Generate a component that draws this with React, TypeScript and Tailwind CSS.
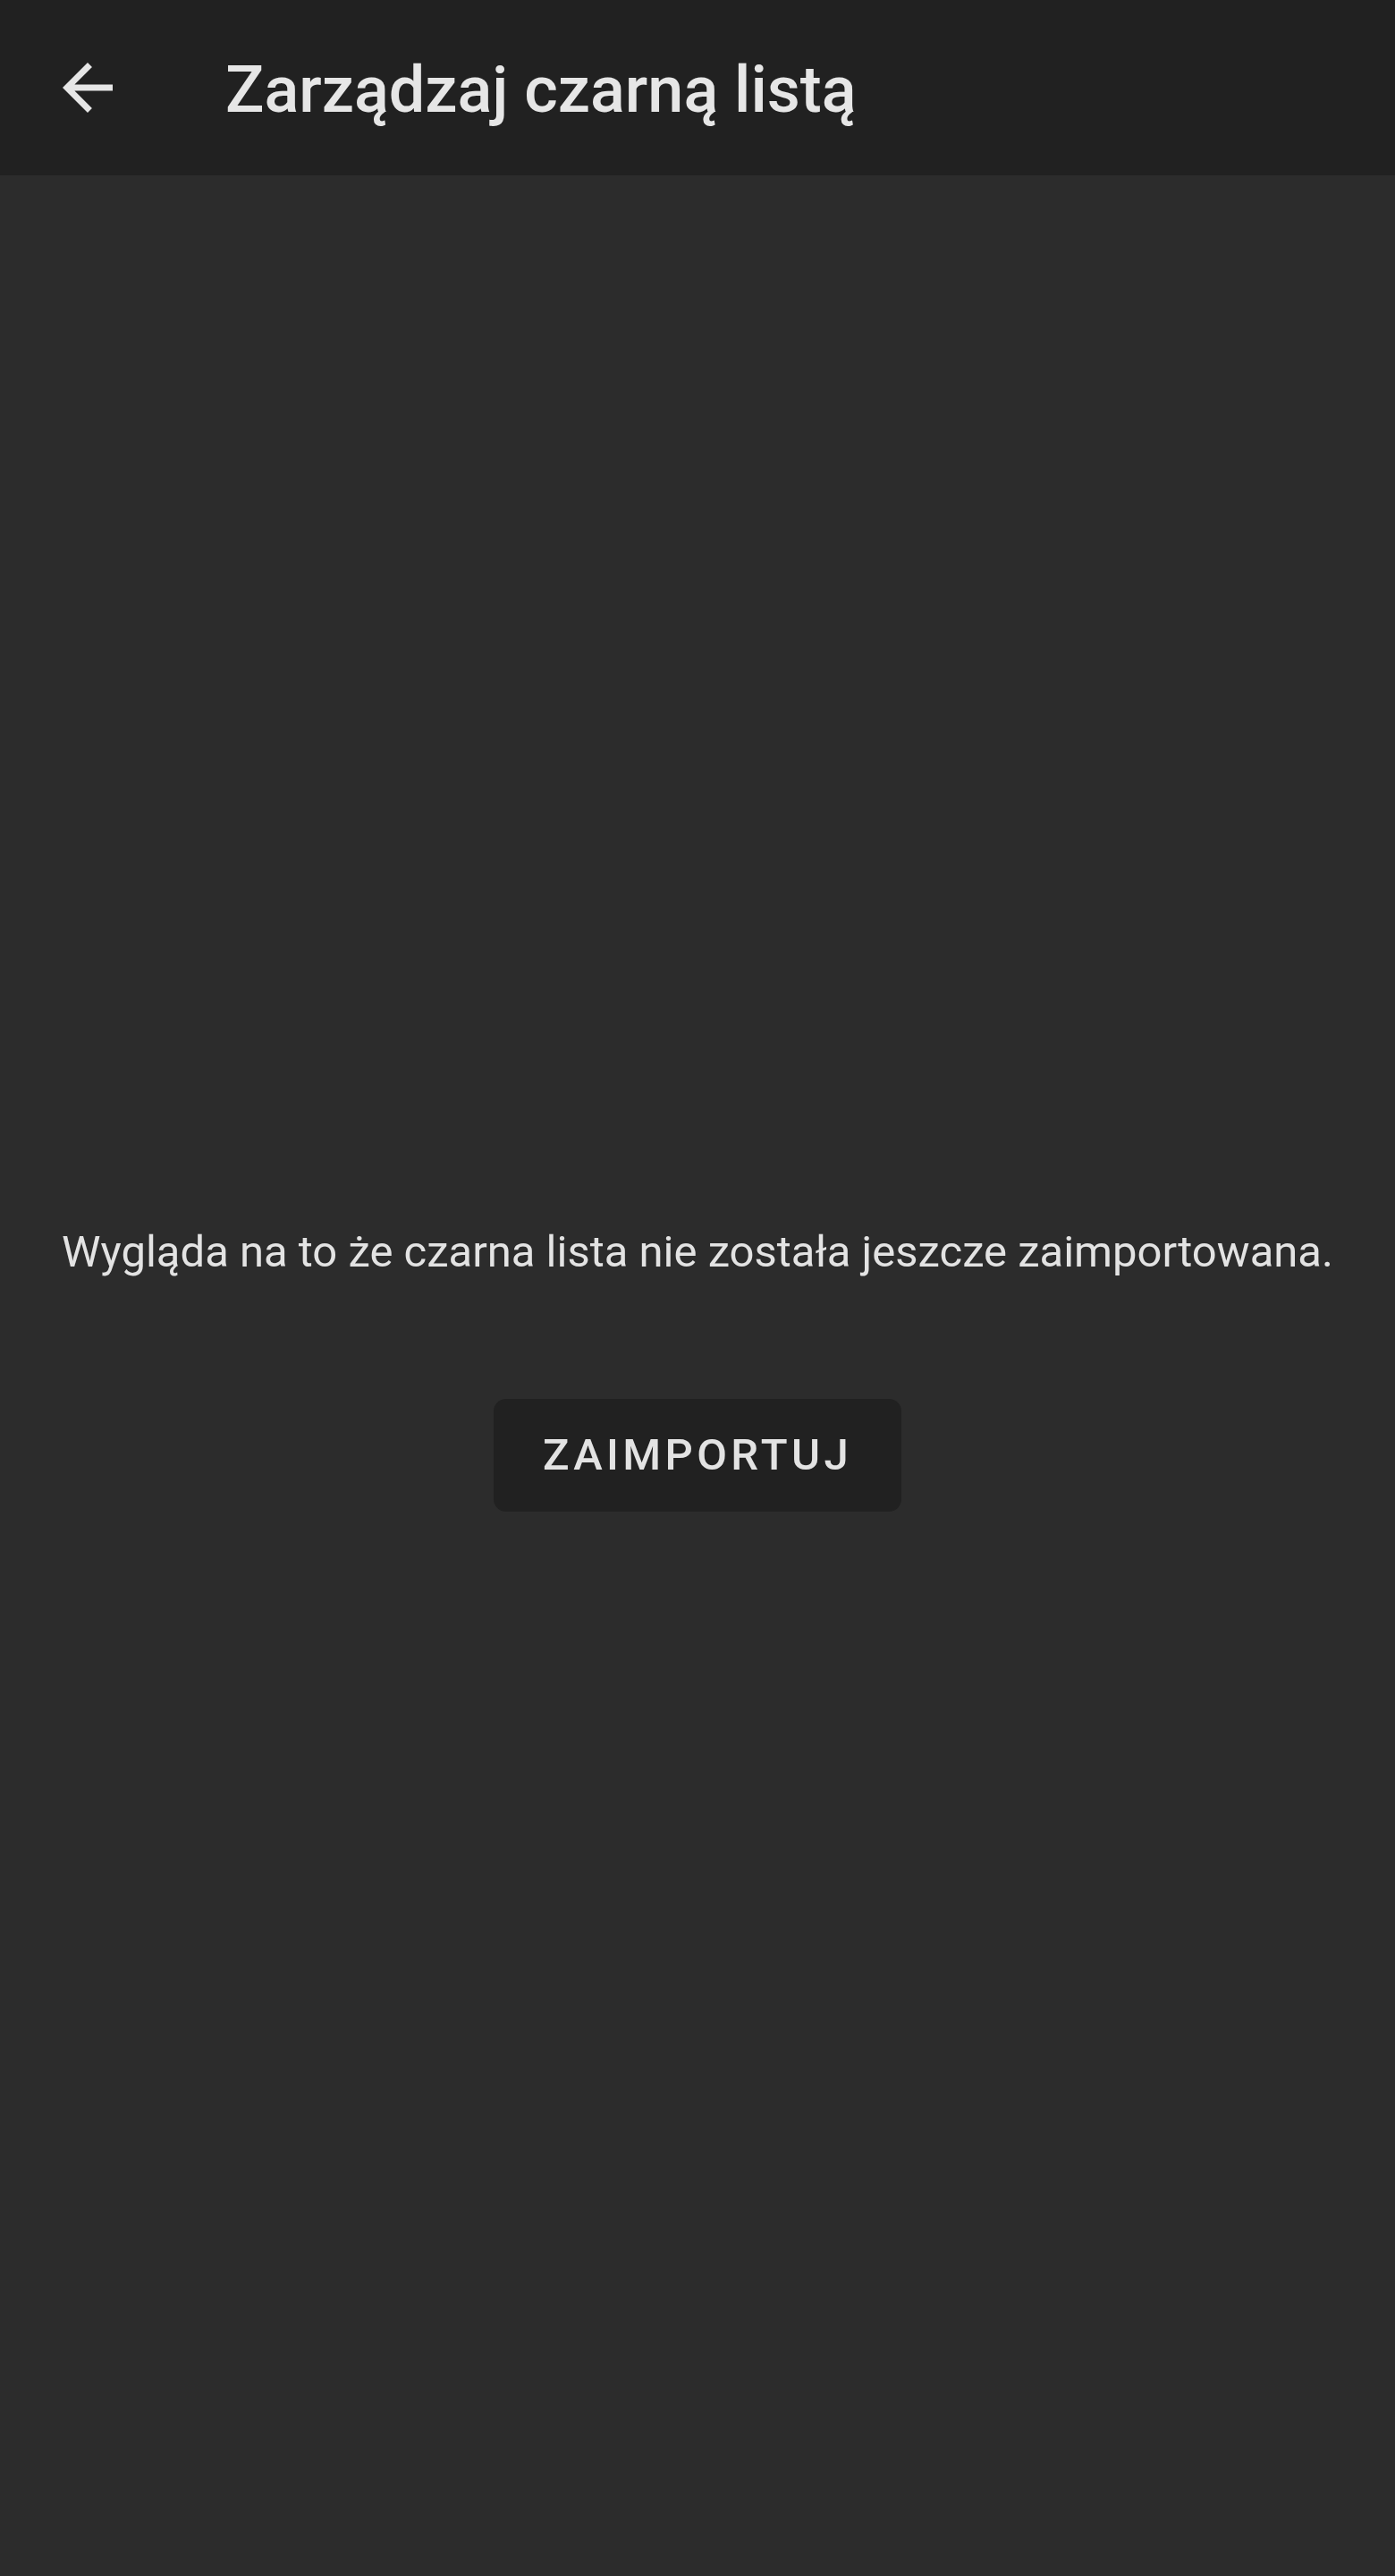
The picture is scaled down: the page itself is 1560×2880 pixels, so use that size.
export default function App() {
  return (
    <div className="min-h-[2880px] w-full bg-[#2c2c2c] flex flex-col" style={{ fontFamily: 'Roboto, "Noto Sans", sans-serif' }}>
      <header className="h-[196px] bg-[#212121] flex items-center pl-[56px] shrink-0">
        <svg width="84" height="84" viewBox="0 0 24 24" fill="#e6e6e6" aria-label="Wstecz">
          <path d="M20 11H7.83l5.59-5.59L12 4l-8 8 8 8 1.41-1.41L7.83 13H20v-2z" />
        </svg>
        <h1 className="ml-[112px] pt-[6px] text-[72px] font-medium text-[#e6e6e6] leading-normal">
          Zarządzaj czarną listą
        </h1>
      </header>
      <main className="flex flex-col items-center pt-[1169px]">
        <p className="text-[49px] leading-[70px] text-[#e3e3e3] text-center">
          Wygląda na to że czarna lista nie została jeszcze zaimportowana.
        </p>
        <button className="mt-[129px] w-[456px] h-[126px] rounded-[14px] bg-[#212121] text-[49px] font-medium tracking-[0.0892em] text-[#e3e3e3] flex items-center justify-center">
          ZAIMPORTUJ
        </button>
      </main>
    </div>
  );
}
